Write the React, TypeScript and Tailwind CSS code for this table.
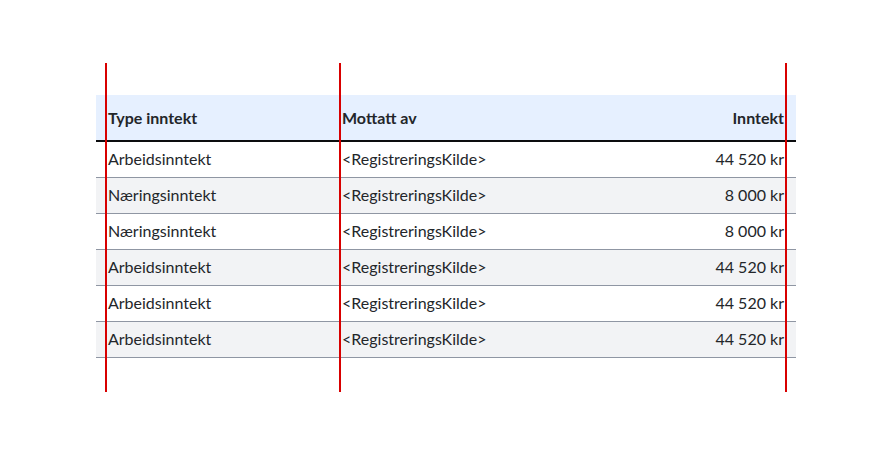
const rows = [
  { type: 'Arbeidsinntekt', source: '<RegistreringsKilde>', amount: '44 520 kr' },
  { type: 'Næringsinntekt', source: '<RegistreringsKilde>', amount: '8 000 kr' },
  { type: 'Næringsinntekt', source: '<RegistreringsKilde>', amount: '8 000 kr' },
  { type: 'Arbeidsinntekt', source: '<RegistreringsKilde>', amount: '44 520 kr' },
  { type: 'Arbeidsinntekt', source: '<RegistreringsKilde>', amount: '44 520 kr' },
  { type: 'Arbeidsinntekt', source: '<RegistreringsKilde>', amount: '44 520 kr' },
]

export default function App() {
  return (
    <div className="min-h-[453px] bg-white pt-[63px] text-[#23262a]" style={{ fontFamily: 'Lato, "Source Sans Pro", sans-serif' }}>
      <div className="relative ml-[96px] w-[700px] pt-8 pb-[34px]">
        {/* column guides */}
        <div className="absolute top-0 bottom-0 left-[9px] w-[2px] bg-[#d80000] z-10" />
        <div className="absolute top-0 bottom-0 left-[243px] w-[2px] bg-[#d80000] z-10" />
        <div className="absolute top-0 bottom-0 left-[689px] w-[2px] bg-[#d80000] z-10" />
        <table className="w-full border-collapse text-base">
          <thead>
            <tr className="h-[46px] bg-[#e6f0ff] border-b-2 border-[#0c0d0f]">
              <th className="w-[234px] px-3 text-left font-bold">Type inntekt</th>
              <th className="px-3 text-left font-bold">Mottatt av</th>
              <th className="px-3 text-right font-bold">Inntekt</th>
            </tr>
          </thead>
          <tbody>
            {rows.map((r, i) => (
              <tr key={i} className={`h-[36px] border-b border-[#8f96a3] ${i % 2 ? 'bg-[#f2f3f5]' : 'bg-white'}`}>
                <td className="px-3">{r.type}</td>
                <td className="px-3">{r.source}</td>
                <td className="px-3 text-right">{r.amount}</td>
              </tr>
            ))}
          </tbody>
        </table>
      </div>
    </div>
  )
}
